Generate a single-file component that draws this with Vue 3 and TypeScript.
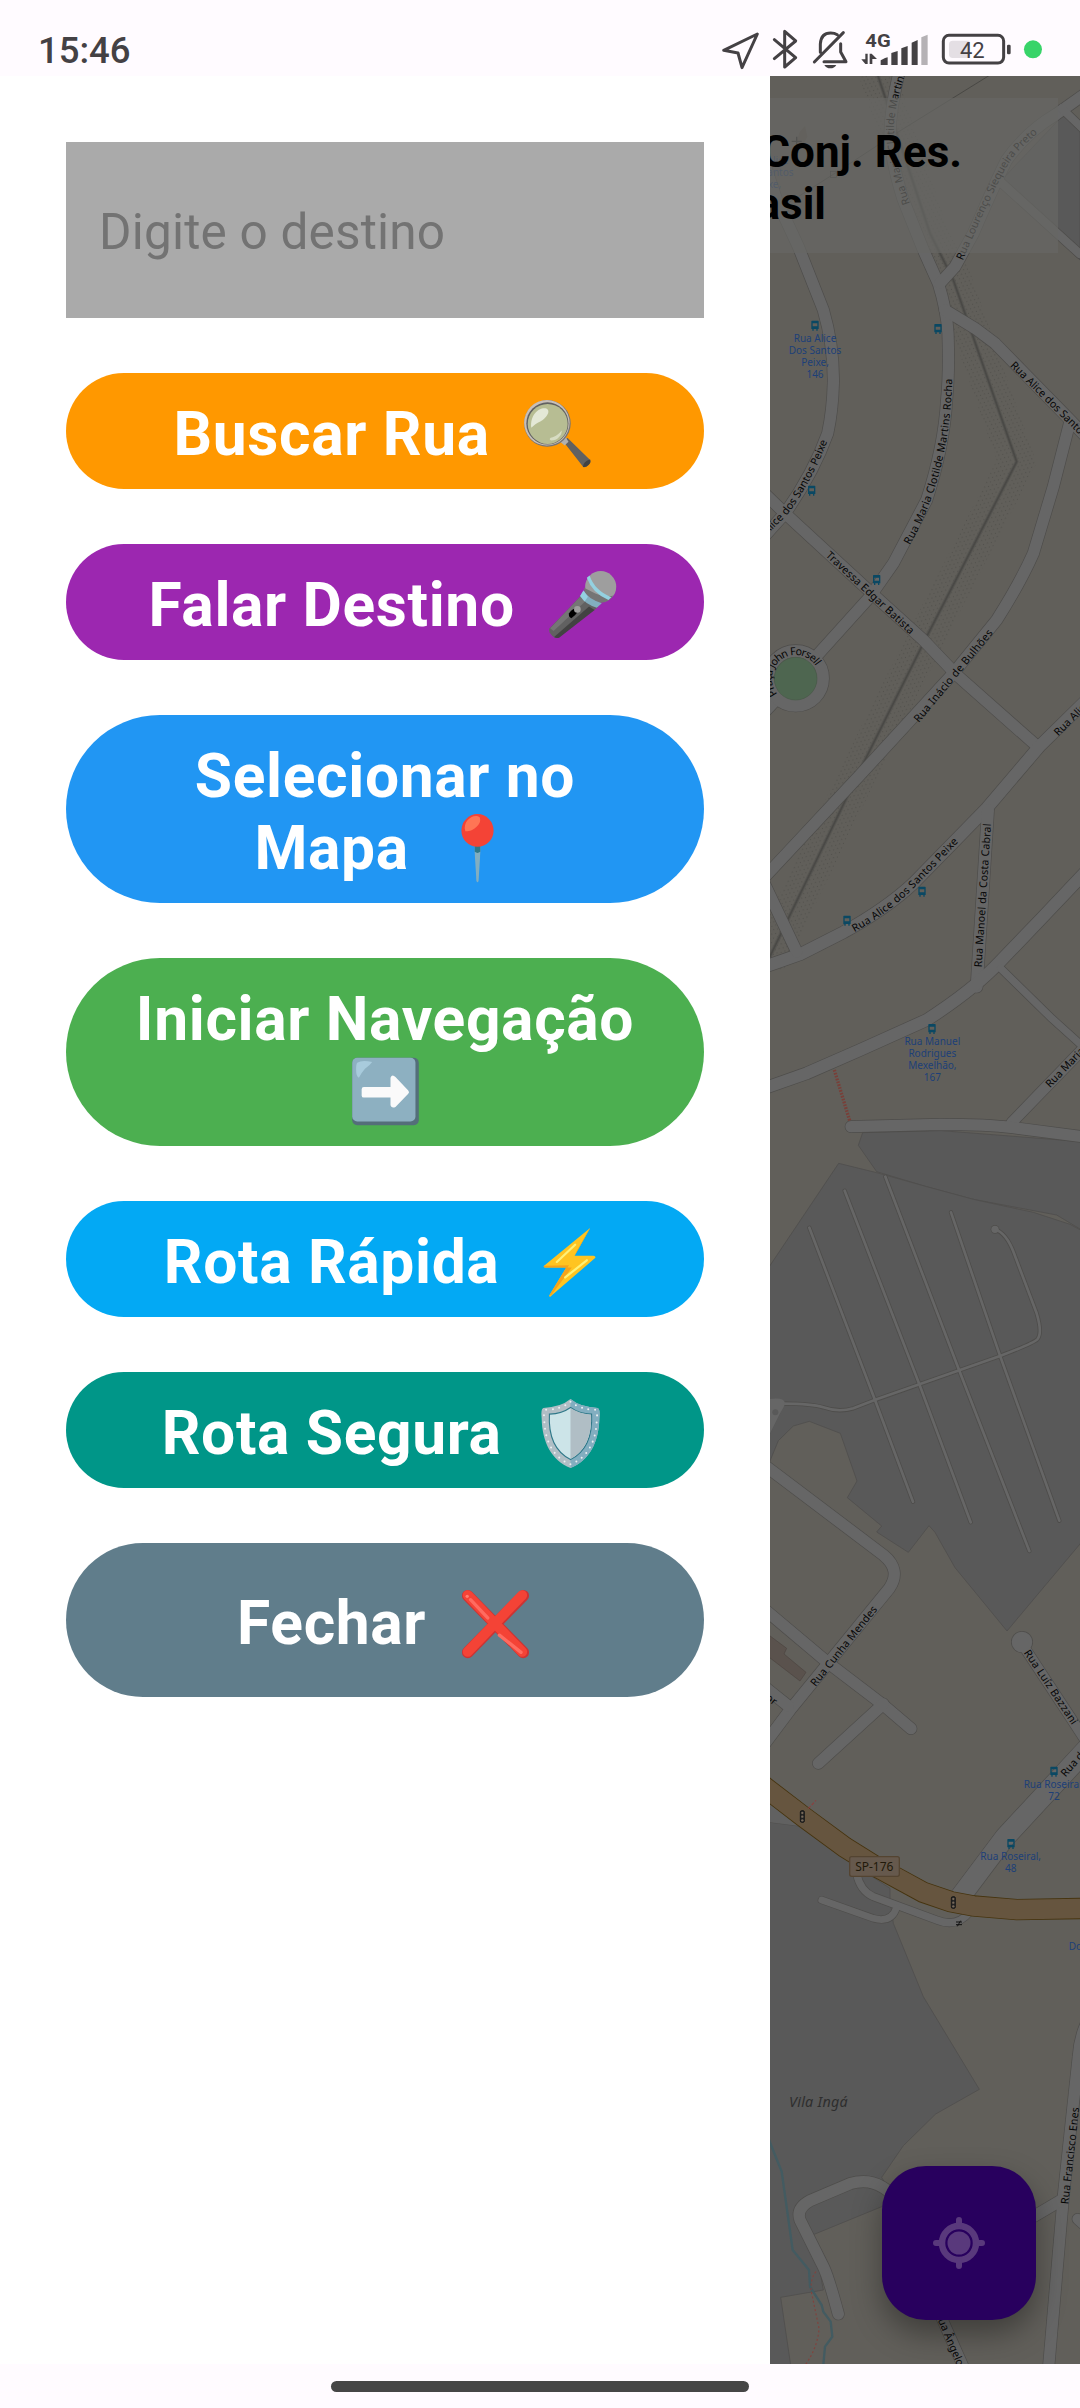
<script setup lang="ts">
type IconName = 'search' | 'mic' | 'pin' | 'arrow' | 'bolt' | 'shield' | 'cross'

interface Action {
  id: IconName
  lines: string[]
  color: string
  tall?: boolean
}

interface Road {
  d: string
  w: number
}

interface StreetLabel {
  id: string
  d: string
  text: string
  len?: number
  end?: boolean
}

const gap = '\u00a0\u00a0'

const actions: Action[] = [
  { id: 'search', lines: ['Buscar Rua' + gap], color: '#ff9800' },
  { id: 'mic', lines: ['Falar Destino' + gap], color: '#9c27b0' },
  { id: 'pin', lines: ['Selecionar no', 'Mapa' + gap], color: '#2196f3' },
  { id: 'arrow', lines: ['Iniciar Navegação', ''], color: '#4caf50' },
  { id: 'bolt', lines: ['Rota Rápida' + gap], color: '#03a9f4' },
  { id: 'shield', lines: ['Rota Segura' + gap], color: '#009688' },
  { id: 'cross', lines: ['Fechar' + gap], color: '#607d8b', tall: true },
]

// Map units are thirds of a pixel.
const areas: string[] = [
  'M910 345L960 395V780L715 550Z',
  'M308 3398L295 3436L350 3515L500 3560L640 3598L890 3645L965 3690V3425L545 3392Z',
  'M25 3804L236 3490L350 3518L500 3560L640 3598L820 3637L930 3673L965 3692V4626L741 4893L585 4703L525 4597L507 4577L445 4657L350 4596L365 4578L262 4493L291 4443L241 4300L148 4264L100 4278L55 4322L25 4395Z',
  'M25 5466L115 5478L265 5583L390 5665V5700L400 5770L490 5990L658 6268L527 6342L430 6437L365 6532L400 6590L365 6620L160 6704L190 6870L62 6892L92 7095H25Z',
]

const roads: Road[] = [
  { d: 'M10 480L50 600L115 740L190 930Q222 1040 220 1150Q218 1230 203 1300Q160 1420 75 1540L10 1612', w: 34 },
  { d: 'M418 215Q392 320 390 400Q392 480 430 600L490 750L535 850Q560 930 564 1000Q568 1120 560 1200Q552 1340 500 1500L400 1690L330 1790L150 1990', w: 34 },
  { d: 'M980 278L890 342Q800 395 740 480Q700 560 640 700L585 800L540 850', w: 34 },
  { d: 'M715 540L960 762', w: 26 },
  { d: 'M905 325L985 402', w: 24 },
  { d: 'M555 930L645 985L705 1030L935 1265L985 1318', w: 34 },
  { d: 'M930 1265L880 1460L820 1660Q780 1750 710 1860L580 2020L300 2325L20 2625', w: 34 },
  { d: 'M10 1477L75 1540L330 1775L490 1920L590 2025L835 2242', w: 34 },
  { d: 'M15 2900L120 2863L250 2797Q380 2725 460 2650L680 2425L840 2237L985 2095', w: 36 },
  { d: 'M15 2655L110 2855', w: 34 },
  { d: 'M684 2430L650 2960', w: 36 },
  { d: 'M980 2612L840 2760L720 2885Q640 2970 500 3060L300 3150L140 3220L15 3264', w: 36 },
  { d: 'M722 2905L875 3055L975 3145', w: 22 },
  { d: 'M985 3130L755 3368', w: 32 },
  { d: 'M273 3380L540 3373Q680 3373 760 3383L975 3411', w: 34 },
  { d: 'M107 2036L10 2140', w: 34 },
  { d: 'M10 4393L370 4665Q425 4710 388 4765L90 5130L10 5237', w: 34 },
  { d: 'M10 4825L200 4985L370 5115L453 5186', w: 34 },
  { d: 'M370 5112L175 5290', w: 34 },
  { d: 'M10 5058L85 5118', w: 34 },
  { d: 'M795 4945L930 5150L985 5235', w: 30 },
  { d: 'M985 5242L735 5512L600 5692', w: 60 },
  { d: 'M290 5620Q300 5672 340 5690L530 5760Q590 5785 630 5735', w: 22 },
  { d: 'M185 5700L340 5755Q395 5770 410 5722', w: 20 },
  { d: 'M420 6610Q370 6545 310 6545Q290 6545 270 6551L150 6602Q108 6625 120 6660L190 6800Q205 6830 235 6942', w: 34 },
  { d: 'M990 6050Q960 6100 955 6170L910 6590L866 7100', w: 34 },
  { d: 'M800 6662L905 6600', w: 34 },
  { d: 'M953 6657L990 6690', w: 32 },
  { d: 'M530 6920L610 7100', w: 32 },
]

const lanes: Road[] = [
  { d: 'M148 3683L345 4200L459 4505', w: 8 },
  { d: 'M254 3572L480 4158L632 4567', w: 8 },
  { d: 'M376 3530L598 4112L808 4653', w: 8 },
  { d: 'M573 3637L720 4067L898 4562', w: 8 },
  { d: 'M705 3688Q740 3700 762 3760L830 3940Q848 4000 832 4018Q820 4030 720 4068L350 4198L280 4225Q235 4238 190 4222Q150 4210 60 4211', w: 8 },
]

const labels: StreetLabel[] = [
  { id: 'l1', d: 'M-165 1775L75 1535Q140 1450 192 1320', text: 'Rua Alice dos Santos Peixe', end: true },
  { id: 'l2', d: 'M440 1630Q560 1420 566 1130L566 1100', text: 'Rua Maria Clotilde Martins Rocha', len: 515 },
  { id: 'l3', d: 'M757 1090L1160 1488', text: 'Rua Alice dos Santos Peixe' },
  { id: 'l4', d: 'M203 1660L465 1903', text: 'Travessa Edgar Batista', len: 348 },
  { id: 'l5', d: 'M468 2162L700 1882', text: 'Rua Inácio de Bulhões', len: 350 },
  { id: 'l6', d: 'M887 2202L1200 1890', text: 'Rua Alice dos Santos' },
  { id: 'l7', d: 'M278 2787Q380 2730 460 2650L610 2495', text: 'Rua Alice dos Santos Peixe', len: 412 },
  { id: 'l8', d: 'M654 2902L684 2440', text: 'Rua Manoel da Costa Cabral', len: 432 },
  { id: 'l9', d: 'M862 3257L1100 3010', text: 'Rua Maria' },
  { id: 'l10', d: 'M79 2113A82 82 0 1 1 176 1992', text: 'Praça John Forsell', end: true },
  { id: 'l11', d: 'M158 5054L370 4790', text: 'Rua Cunha Mendes', len: 298 },
  { id: 'l12', d: 'M800 4952L965 5200', text: 'Rua Luíz Bazzani', len: 262 },
  { id: 'l13', d: 'M908 5325L1100 5110', text: 'Rua dos' },
  { id: 'l14', d: 'M914 6612L950 6290', text: 'Rua Francisco Enes', len: 292 },
  { id: 'l15', d: 'M525 6913L603 7096', text: 'Rua Ângelo', end: true },
  { id: 'l16', d: 'M-60 5026L48 5108', text: 'Salvador', end: true },
  { id: 'l17', d: 'M440 614Q385 460 392 360Q400 290 432 200', text: 'Rua Maria Clotilde Martins', len: 412 },
  { id: 'l18', d: 'M598 778Q700 540 740 480Q770 435 840 380', text: 'Rua Lourenço Siequeira Preto', len: 455 },
]

const stops: Array<[number, number]> = [
  [165, 977], [534, 987], [155, 1472], [350, 1740], [486, 2675],
  [261, 2762], [516, 3087], [882, 5315], [753, 5532],
]

const stopLabels: Array<{ x: number; y: number; lines: string[] }> = [
  { x: 22, y: 491, lines: ['Rua Alice', 'Dos Santos', 'Peixe,'] },
  { x: 165, y: 1025, lines: ['Rua Alice', 'Dos Santos', 'Peixe,', '146'] },
  { x: 517, y: 3135, lines: ['Rua Manuel', 'Rodrigues', 'Mexelhão,', '167'] },
  { x: 882, y: 5365, lines: ['Rua Roseiral,', '72'] },
  { x: 752, y: 5581, lines: ['Rua Roseiral,', '48'] },
  { x: 1006, y: 5850, lines: ['Dom Pedro'] },
]

const powerLine = 'M350 215L510 700L580 840L770 1385L500 1910L300 2310L20 2890'
const highway = 'M5 5354L130 5450L255 5542L345 5598L490 5677L572 5705L640 5718L770 5729L980 5725'
</script>

<template>
  <div class="screen">
    <header class="status">
      <span class="time">15:46</span>
      <svg class="status-icons" viewBox="120 80 980 130">
        <g fill="none" stroke="#444144" stroke-width="9" stroke-linejoin="round" stroke-linecap="round">
          <path d="M232 101L131 150L174 158L186 202Z" />
          <path d="M283 118L347 172L314 200V93L347 122L283 175" />
          <path d="M490 97L403 185M421 156V131Q423 98 452 98Q464 98 472 103M482 130V155L498 184H432" />
          <rect x="790" y="105" width="181" height="83" rx="17" />
        </g>
        <g fill="#444144">
          <path d="M433 194H469Q463 204 451 204Q439 204 433 194Z" />
          <path d="M556 160H563V191H556L544 177H556ZM569 191V160H575L591 176H577V191Z" />
          <path d="M602 194V180L608 177Q615 172 623 171V194ZM634 194V158L653 152V194ZM664 194V144L683 137V194ZM695 194V127L713 119V194Z" />
          <path fill="#b5b1b5" d="M724 194V111L743 103V194Z" />
          <rect x="981" y="133" width="11" height="29" rx="4" />
          <text x="556" y="139" font-size="55" font-weight="700" textLength="76" lengthAdjust="spacingAndGlyphs">4G</text>
        </g>
        <path fill="#e4dfe4" d="M818 121H868V173H818Q807 173 807 162V132Q807 121 818 121Z" />
        <text x="840" y="173" font-size="66" fill="#444144">42</text>
        <circle cx="1059" cy="147" r="27" fill="#38d469" />
      </svg>
    </header>

    <main class="body">
      <section class="drawer">
        <div class="field">Digite o destino</div>
        <button
          v-for="a in actions"
          :key="a.id"
          class="action"
          :class="{ tall: a.tall }"
          :style="{ backgroundColor: a.color }"
        >
          <span v-for="(line, i) in a.lines" :key="i" class="line">{{ line }}<svg
            v-if="i === a.lines.length - 1"
            class="emoji"
            viewBox="0 0 128 128"
          >
            <g v-if="a.id === 'search'">
              <path d="M73 77L80 70L121 110Q123 115 118 119Q113 124 109 123Z" fill="#616161" />
              <path d="M108 122Q109 112 121 109Q123 115 118 119Q113 124 108 122Z" fill="#424242" />
              <path d="M67 77L77 69L82 77L75 84Z" fill="#b0b0b0" />
              <circle cx="44" cy="44" r="42" fill="#757575" />
              <circle cx="43" cy="43" r="41" fill="#c8bfb8" />
              <circle cx="44" cy="44" r="38" fill="#616161" />
              <circle cx="44.500" cy="45" r="36" fill="#b7bd93" />
              <path d="M15 52C12 28 30 14 42 17C52 22 40 36 32 40C24 44 20 47 15 52Z" fill="#e4e8d6" />
              <path d="M50 70C60 68 65 62 70 57C70 66 62 75 51 75Q46 73 50 70Z" fill="#d7dcc2" />
            </g>
            <g v-else-if="a.id === 'mic'">
              <path d="M60 46L90 67L20 121Q14 125 8 119L3 113Q0 109 3 105Z" fill="#616161" />
              <path d="M74 66L84 72L20 122Q15 124 11 121Z" fill="#424242" />
              <path d="M60 46L4 105L10 110L68 56Z" fill="#757575" />
              <path d="M38 78Q44 69 52 69Q55 75 49 81L42 87Q36 84 38 78Z" fill="#000" />
              <circle cx="53" cy="71" r="6" fill="#9e9e9e" />
              <circle cx="95" cy="30" r="28" fill="#9e9e9e" />
              <path d="M65 32C78 38 100 53 118 46Q108 60 93 59Q74 54 66 40Z" fill="#757575" />
              <path d="M75 10Q84 37 114 49L109 54Q80 42 70 14Z" fill="#94d1e0" />
              <path d="M64 37Q72 52 97 60L88 68Q67 62 58 47Z" fill="#82aec0" />
              <path d="M64 37L72 48L66 57L58 47Z" fill="#94d1e0" />
            </g>
            <g v-else-if="a.id === 'pin'">
              <path d="M59 58H69V72L66 122Q64 128 62 122L59 72Z" fill="#82aec0" />
              <path d="M59 58H69V70Q64 74 59 70Z" fill="#2f7889" />
              <ellipse cx="64" cy="31.500" rx="29" ry="29.500" fill="#f44336" />
              <path d="M68 8C73 20 55 34 42 33C36 14 58 -1 68 8Z" fill="#ff7555" />
            </g>
            <g v-else-if="a.id === 'arrow'">
              <rect x="4" y="3" width="120" height="122" rx="9" fill="#546e7a" />
              <rect x="4" y="3" width="114" height="115" rx="9" fill="#8db0c1" />
              <path d="M13 12Q22 7 40 11Q36 17 27 23Q20 31 16 39Q11 38 11 24Q11 15 13 12Z" fill="#a8cbdc" />
              <path d="M25 56H73V39Q76 32 82 38L105 62Q108 65 105 68L82 92Q75 95 73 89V75H25Q21 75 21 71V60Q21 56 25 56Z" fill="#fafafa" />
            </g>
            <g v-else-if="a.id === 'bolt'">
              <path d="M103 2L20 70Q18 73 22 73H60L29 124Q30 128 34 123L112 56Q114 53 109 52H75Z" fill="#ffc421" />
              <path d="M103 2L75 52L79 43L101 4ZM60 73L29 124L33 123L70 73ZM20 70Q18 73 22 73H62L65 69Z" fill="#f5a31a" />
              <path d="M76 32L43 63M58 91L97 60" stroke="#fff176" stroke-width="4" stroke-linecap="round" />
            </g>
            <g v-else-if="a.id === 'shield'">
              <path d="M64 2Q82 17 113 18Q118 20 116 37C115 80 98 113 64 126C30 113 13 80 12 37Q10 20 15 18Q46 17 64 2Z" fill="#b0bec5" />
              <path d="M64 2Q82 17 113 18Q118 20 116 37C115 80 98 113 64 126Z" fill="#82aec0" />
              <path d="M64 2Q82 17 113 18Q118 20 116 37C115 80 98 113 64 126C30 113 13 80 12 37Q10 20 15 18Q46 17 64 2Z" fill="none" stroke="#eceff1" stroke-width="4" stroke-linecap="round" stroke-dasharray="0 13" transform="translate(5.800 5) scale(.91)" />
              <path d="M64 17Q79 28 102 29C104 67 92 97 64 111C36 97 24 67 26 29Q49 28 64 17Z" fill="#cce4e8" stroke="#2f7889" stroke-width="2" />
              <path d="M64 18Q79 28 101 30C103 67 91 96 64 110Z" fill="#b0bec5" />
            </g>
            <g v-else>
              <path d="M14 14L114 116M114 14L14 116" stroke="#c33" stroke-width="21" stroke-linecap="round" />
              <path d="M14 13L112 115M112 13L14 115" stroke="#f44336" stroke-width="18" stroke-linecap="round" />
              <path d="M19 21L50 54M71 85L110 116" stroke="#ff6b60" stroke-width="6" stroke-linecap="round" />
              <circle cx="13" cy="15" r="3" fill="#ff7e70" />
            </g>
          </svg></span>
        </button>
      </section>

      <section class="map">
        <svg class="tiles" viewBox="30 228 930 6864">
          <defs>
            <pattern id="dots" width="19" height="15" patternUnits="userSpaceOnUse" patternTransform="rotate(24)">
              <circle cx="4" cy="4" r="1.800" fill="#504f4b" />
              <circle cx="13" cy="11" r="1.800" fill="#504f4b" />
            </pattern>
          </defs>
          <rect x="30" y="228" width="930" height="6864" fill="#615f5a" />
          <g fill="#595959" stroke="#4f4e4d" stroke-width="2.500">
            <path v-for="(d, i) in areas" :key="i" :d="d" />
          </g>
          <path d="M25 5386L120 5478L25 5466Z" fill="#616161" />
          <path d="M25 4904L80 4945L72 4962L138 5017L120 5043L25 4970Z" fill="#5a524d" stroke="#4b4440" stroke-width="2" />
          <path d="M95 460L120 395L135 378L142 410L125 440Z" fill="#5a524d" />
          <path d="M95 424H125M110 410V438" stroke="#222" stroke-width="4" />
          <path :d="powerLine" fill="none" stroke="url(#dots)" stroke-width="110" />
          <path :d="powerLine" fill="none" stroke="#575652" stroke-width="11" />
          <path :d="powerLine" fill="none" stroke="#4a4946" stroke-width="5" />
          <path d="M690 225L400 405L220 523L20 650" fill="none" stroke="#3d3c3a" stroke-width="2" />
          <rect x="211" y="514" width="18" height="18" fill="none" stroke="#333" stroke-width="2" />
          <path d="M25 6415L65 6515L98 6750L147 6810L150 6860L185 6915L190 6935L212 6965L217 7010L195 7040L190 7095" fill="none" stroke="#435b61" stroke-width="7" />

          <g fill="none" stroke="#4e4d4b" stroke-linejoin="round" stroke-linecap="round">
            <path v-for="(r, i) in roads" :key="i" :d="r.d" :stroke-width="r.w + 4" />
            <circle cx="107" cy="2035" r="82" stroke-width="40" />
            <path v-for="(r, i) in lanes" :key="'c' + i" :d="r.d" :stroke-width="r.w + 5" />
          </g>
          <circle cx="786" cy="4926" r="33" fill="#4e4d4b" />
          <circle cx="705" cy="3688" r="13" fill="#4e4d4b" />
          <g fill="none" stroke="#666" stroke-linejoin="round" stroke-linecap="round">
            <path v-for="(r, i) in roads" :key="i" :d="r.d" :stroke-width="r.w" />
            <circle cx="107" cy="2035" r="82" stroke-width="36" />
            <path v-for="(r, i) in lanes" :key="'l' + i" :d="r.d" :stroke-width="r.w" />
          </g>
          <circle cx="786" cy="4926" r="31" fill="#666" />
          <circle cx="705" cy="3688" r="11" fill="#666" />
          <path d="M25 4198Q75 4190 75 4212Q70 4225 60 4240L25 4310Z" fill="#666" />
          <circle cx="46" cy="4237" r="9" fill="#595959" />
          <circle cx="107" cy="2036" r="64" fill="#4e6650" stroke="#4a5a4a" stroke-width="2" />

          <path :d="highway" fill="none" stroke="#46340f" stroke-width="64" />
          <path :d="highway" fill="none" stroke="#66553f" stroke-width="59" />
          <path d="M223 3210L269 3362" stroke="#793f38" stroke-width="10" stroke-dasharray="5 4" />
          <path d="M145 5426L168 5401" stroke="#8a4140" stroke-width="3.500" stroke-dasharray="10 5" />
          <path d="M168 6815Q148 6840 155 6880L177 6985Q174 7040 136 7095" fill="none" stroke="#80433e" stroke-width="3.500" stroke-dasharray="6 7" />

          <g v-for="s in stops" :key="s.join()" :transform="`translate(${s[0]} ${s[1]})`">
            <path d="M-11 -13Q-11 -15 -9 -15H9Q11 -15 11 -13V10H8V15H4V10H-4V15H-8V10H-11ZM-7 -7V2H7V-7Z" fill="#0a4863" fill-rule="evenodd" />
          </g>
          <g v-for="p in [[127, 5449], [580, 5707]]" :key="p[0]" :transform="`translate(${p[0]} ${p[1]})`">
            <rect x="-6" y="-17" width="12" height="35" rx="4" fill="#222" stroke="#1a1a1a" stroke-width="3" />
            <circle cy="-10" r="3.500" fill="#77695a" />
            <circle cy="1" r="3.500" fill="#77695a" />
            <circle cy="12" r="3.500" fill="#77695a" />
          </g>
          <path d="M588 5766H606M588 5774H606M602 5762L592 5779" stroke="#111" stroke-width="3" />
          <rect x="269" y="5570" width="149" height="59" rx="6" fill="#66594d" stroke="#544431" stroke-width="4" />

          <g class="map-text">
            <text x="343" y="5612" font-size="36" fill="#21190a" text-anchor="middle" textLength="114">SP-176</text>
            <text x="87" y="6321" font-size="43" font-style="italic" fill="#2e2e2e" textLength="176">Vila Ingá</text>
            <g v-for="(s, i) in stopLabels" :key="i" fill="#1d3f78" text-anchor="middle" font-size="30">
              <text v-for="(t, j) in s.lines" :key="j" :x="s.x" :y="s.y + j * 36">{{ t }}</text>
            </g>
            <g font-size="32" fill="#060606">
              <template v-for="l in labels" :key="l.id">
                <path :id="l.id" :d="l.d" fill="none" />
                <text dy="11" :textLength="l.len" :text-anchor="l.end ? 'end' : 'start'">
                  <textPath :href="'#' + l.id" :startOffset="l.end ? '100%' : '0'" :textLength="l.len">{{ l.text }}</textPath>
                </text>
              </template>
            </g>
          </g>
        </svg>

        <div class="place">
          <span>Conj. Res.</span>
          <span class="second">Brasil</span>
        </div>

        <button class="locate" aria-label="Localização">
          <svg viewBox="0 0 52 52">
            <circle cx="26" cy="26" r="17" fill="none" stroke="#59397c" stroke-width="6.500" />
            <circle cx="26" cy="26" r="11.500" fill="#59397c" />
            <path d="M26 3V8M26 44V49M3 26H8M44 26H49" stroke="#59397c" stroke-width="6" stroke-linecap="round" />
          </svg>
        </button>
      </section>
    </main>

    <footer class="nav"><span class="handle"></span></footer>
  </div>
</template>

<style>
body {
  background: #fffbff;
}
</style>

<style scoped>
.screen {
  width: 1080px;
  height: 2408px;
  display: flex;
  flex-direction: column;
  overflow: hidden;
  background: #fffbff;
  font-family: Roboto, "Noto Sans", sans-serif;
}
.status {
  height: 76px;
  flex: none;
  box-sizing: border-box;
  padding: 0 33px 0 38px;
  display: flex;
  justify-content: space-between;
  align-items: flex-start;
}
.time {
  font-size: 36.500px;
  font-weight: 500;
  line-height: 44px;
  margin-top: 28.500px;
  color: #444144;
}
.status-icons {
  width: 326.670px;
  height: 43.330px;
  margin-top: 26.670px;
}
.body {
  flex: 1;
  min-height: 0;
  display: flex;
}
.drawer {
  width: 770px;
  flex: none;
  box-sizing: border-box;
  padding: 66px;
  display: flex;
  flex-direction: column;
  gap: 55px;
  background: #fff;
}
.field {
  height: 176px;
  box-sizing: border-box;
  padding: 4px 33px 0;
  display: flex;
  align-items: center;
  background: #aaa;
  color: #737373;
  font-size: 49.500px;
  line-height: 60px;
  letter-spacing: 0.200px;
}
.action {
  border: 0;
  margin: 0;
  padding: 26px 20px 18px;
  border-radius: 94px;
  color: #fff;
  font: 700 60.500px/72px Roboto, "Noto Sans", sans-serif;
  letter-spacing: 0.650px;
}
.tall {
  padding: 45px 20px 37px;
}
.line {
  display: block;
  height: 72px;
  white-space: nowrap;
}
.emoji {
  width: 71px;
  height: 71px;
  margin: 0 2.200px;
  vertical-align: -15px;
  overflow: visible;
}
.map {
  position: relative;
  width: 310px;
  flex: none;
  overflow: hidden;
}
.tiles {
  display: block;
  width: 310px;
  height: 2288px;
}
.map-text {
  font-family: "Noto Sans", sans-serif;
}
.place {
  position: absolute;
  top: 22px;
  left: -40px;
  width: 328px;
  height: 155px;
  box-sizing: border-box;
  padding: 28px 96px 0 0;
  display: flex;
  flex-direction: column;
  align-items: flex-end;
  background: rgba(102, 102, 100, 0.72);
  color: #000;
  font-size: 44px;
  font-weight: 700;
  line-height: 52px;
  white-space: nowrap;
}
.second {
  margin-right: 136px;
}
.locate {
  position: absolute;
  right: 44px;
  bottom: 44px;
  width: 154px;
  height: 154px;
  padding: 0;
  border: 0;
  border-radius: 44px;
  display: flex;
  align-items: center;
  justify-content: center;
  background: #28005e;
  box-shadow: 0 14px 30px rgba(0, 0, 0, 0.35);
}
.locate svg {
  width: 52px;
  height: 52px;
}
.nav {
  height: 44px;
  flex: none;
  display: flex;
  justify-content: center;
  align-items: flex-start;
}
.handle {
  width: 418px;
  height: 11px;
  margin-top: 17px;
  border-radius: 6px;
  background: #464646;
}
</style>
